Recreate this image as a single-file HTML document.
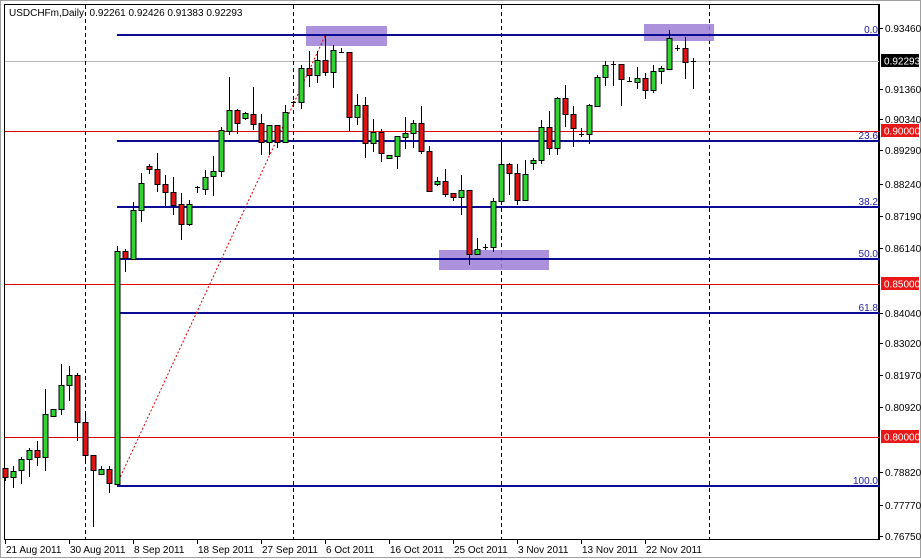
<!DOCTYPE html>
<html><head><meta charset="utf-8"><style>
html,body{margin:0;padding:0;background:#fff;}
svg{display:block;font-family:"Liberation Sans",sans-serif;}
.g{fill:#32d232;stroke:#000;stroke-width:1}
.r{fill:#dc1414;stroke:#000;stroke-width:1}
.t{font-size:10px;fill:#000}
.f{font-size:10px;fill:#2020b0}
</style></head><body>
<svg width="921" height="559" viewBox="0 0 921 559" xmlns="http://www.w3.org/2000/svg">
<rect x="0" y="0" width="921" height="559" fill="#fff"/>
<rect x="0.5" y="0.5" width="920" height="557" fill="none" stroke="#a0a0a0"/>
<rect x="4.5" y="4.5" width="874" height="535" fill="#fff" stroke="#000"/>
<line x1="5" y1="61.5" x2="879" y2="61.5" stroke="#b8b8b8"/>
<line x1="5" y1="131.5" x2="879" y2="131.5" stroke="#e00000"/>
<line x1="5" y1="284.5" x2="879" y2="284.5" stroke="#e00000"/>
<line x1="5" y1="437.5" x2="879" y2="437.5" stroke="#e00000"/>
<g stroke="#000" stroke-dasharray="4,3">
<line x1="85.5" y1="5" x2="85.5" y2="539"/>
<line x1="293.5" y1="5" x2="293.5" y2="539"/>
<line x1="501.5" y1="5" x2="501.5" y2="539"/>
<line x1="709.5" y1="5" x2="709.5" y2="539"/>
</g>
<g fill="#9d7fd6" opacity="0.85">
<rect x="306" y="26" width="81" height="20"/>
<rect x="644" y="24" width="70" height="17"/>
<rect x="439" y="250" width="110" height="20"/>
</g>
<g stroke="#0b0b96" stroke-width="2">
<line x1="117" y1="35" x2="879" y2="35"/>
<line x1="117" y1="141" x2="879" y2="141"/>
<line x1="117" y1="207" x2="879" y2="207"/>
<line x1="117" y1="259" x2="879" y2="259"/>
<line x1="117" y1="313" x2="879" y2="313"/>
<line x1="117" y1="486" x2="879" y2="486"/>
</g>
<g class="f" text-anchor="end">
<text x="878" y="33">0.0</text>
<text x="878" y="139">23.6</text>
<text x="878" y="205">38.2</text>
<text x="878" y="257">50.0</text>
<text x="878" y="311">61.8</text>
<text x="878" y="484">100.0</text>
</g>
<line x1="117" y1="484" x2="325" y2="36" stroke="#d00" stroke-dasharray="2,2"/>
<path stroke="#000" fill="none" d="
M5.5 468V481M13.5 466V488M21.5 457V484M29.5 448V477M37.5 441V466M45.5 389V471M53.5 409V417M61.5 364V415M69.5 366V401M77.5 373V441M85.5 411V462M93.5 455V527M101.5 466V475M109.5 466V493M117.5 246V484M125.5 249V272M133.5 202V259M141.5 173V222M149.5 164V174M157.5 153V192M165.5 175V206M173.5 177V215M181.5 193V240M189.5 200V226M197.5 186V193M205.5 170V195M213.5 156V196M221.5 127V177M229.5 77V135M237.5 109V134M245.5 112V120M253.5 87V130M261.5 114V155M269.5 125V155M277.5 125V148M285.5 105V143M293.5 101V104
M301.5 65V109M309.5 51V87M317.5 51V83M325.5 34V76M333.5 45V88M341.5 48V53M349.5 52V131M357.5 94V125M365.5 97V158M373.5 119V152M381.5 129V162M389.5 155V159M397.5 136V169M405.5 117V149M413.5 120V148M421.5 106V154M429.5 146V191M437.5 177V186M445.5 169V197M453.5 193V201M461.5 175V215M469.5 190V265M477.5 238V254M485.5 244V250M493.5 198V252M501.5 142V203M509.5 163V195M517.5 164V205M525.5 160V200M533.5 158V170M541.5 120V164M549.5 111V155M557.5 97V155M565.5 85V127M573.5 106V147M581.5 128V137M589.5 104V144M597.5 75V106M605.5 61V86M613.5 61V86M621.5 64V106M629.5 77V82M637.5 67V89M645.5 73V99M653.5 65V93M661.5 66V84M669.5 30V69M677.5 45V51M685.5 37V79M693.5 58V89
M195 187.5H200M291 102.5H296M339 52.5H344M579 134.5H584M611 64.5H616M627 81.5H632M675 48.5H680M691 61.5H696M483 247.5H488"/>
<g>
<rect class="r" x="3" y="468.5" width="5" height="9"/>
<rect class="g" x="11" y="471.5" width="5" height="6"/>
<rect class="g" x="19" y="459.5" width="5" height="11"/>
<rect class="g" x="27" y="450.5" width="5" height="9"/>
<rect class="r" x="35" y="450.5" width="5" height="7"/>
<rect class="g" x="43" y="414.5" width="5" height="43"/>
<rect class="g" x="51" y="409.5" width="5" height="7"/>
<rect class="g" x="59" y="385.5" width="5" height="24"/>
<rect class="g" x="67" y="375.5" width="5" height="10"/>
<rect class="r" x="75" y="375.5" width="5" height="47"/>
<rect class="r" x="83" y="422.5" width="5" height="33"/>
<rect class="r" x="91" y="455.5" width="5" height="15"/>
<rect class="g" x="99" y="469.5" width="5" height="5"/>
<rect class="r" x="107" y="469.5" width="5" height="14"/>
<rect class="g" x="115" y="251.5" width="5" height="233"/>
<rect class="r" x="123" y="251.5" width="5" height="7"/>
<rect class="g" x="131" y="210.5" width="5" height="49"/>
<rect class="g" x="139" y="183.5" width="5" height="27"/>
<rect class="r" x="147" y="166.5" width="5" height="3"/>
<rect class="r" x="155" y="169.5" width="5" height="15"/>
<rect class="r" x="163" y="184.5" width="5" height="8"/>
<rect class="r" x="171" y="192.5" width="5" height="13"/>
<rect class="r" x="179" y="204.5" width="5" height="20"/>
<rect class="g" x="187" y="204.5" width="5" height="20"/>
<rect class="g" x="203" y="177.5" width="5" height="12"/>
<rect class="g" x="211" y="171.5" width="5" height="5"/>
<rect class="g" x="219" y="130.5" width="5" height="41"/>
<rect class="g" x="227" y="110.5" width="5" height="21"/>
<rect class="r" x="235" y="110.5" width="5" height="13"/>
<rect class="g" x="243" y="113.5" width="5" height="5"/>
<rect class="r" x="251" y="114.5" width="5" height="10"/>
<rect class="r" x="259" y="123.5" width="5" height="19"/>
<rect class="g" x="267" y="125.5" width="5" height="17"/>
<rect class="r" x="275" y="125.5" width="5" height="17"/>
<rect class="g" x="283" y="112.5" width="5" height="30"/>
<rect class="g" x="299" y="68.5" width="5" height="34"/>
<rect class="r" x="307" y="68.5" width="5" height="7"/>
<rect class="g" x="315" y="60.5" width="5" height="15"/>
<rect class="r" x="323" y="60.5" width="5" height="12"/>
<rect class="g" x="331" y="50.5" width="5" height="22"/>
<rect class="r" x="347" y="52.5" width="5" height="65"/>
<rect class="g" x="355" y="105.5" width="5" height="12"/>
<rect class="r" x="363" y="105.5" width="5" height="38"/>
<rect class="g" x="371" y="132.5" width="5" height="11"/>
<rect class="r" x="379" y="132.5" width="5" height="21"/>
<rect class="g" x="387" y="155.5" width="5" height="3"/>
<rect class="g" x="395" y="136.5" width="5" height="20"/>
<rect class="g" x="403" y="133.5" width="5" height="4"/>
<rect class="g" x="411" y="123.5" width="5" height="10"/>
<rect class="r" x="419" y="123.5" width="5" height="28"/>
<rect class="r" x="427" y="151.5" width="5" height="40"/>
<rect class="g" x="435" y="181.5" width="5" height="3"/>
<rect class="r" x="443" y="181.5" width="5" height="13"/>
<rect class="r" x="451" y="193.5" width="5" height="4"/>
<rect class="g" x="459" y="190.5" width="5" height="7"/>
<rect class="r" x="467" y="190.5" width="5" height="64"/>
<rect class="g" x="475" y="249.5" width="5" height="5"/>
<rect class="g" x="491" y="201.5" width="5" height="46"/>
<rect class="g" x="499" y="164.5" width="5" height="37"/>
<rect class="r" x="507" y="164.5" width="5" height="9"/>
<rect class="r" x="515" y="173.5" width="5" height="27"/>
<rect class="g" x="523" y="174.5" width="5" height="26"/>
<rect class="g" x="531" y="160.5" width="5" height="3"/>
<rect class="g" x="539" y="127.5" width="5" height="33"/>
<rect class="r" x="547" y="127.5" width="5" height="21"/>
<rect class="g" x="555" y="98.5" width="5" height="50"/>
<rect class="r" x="563" y="98.5" width="5" height="16"/>
<rect class="r" x="571" y="114.5" width="5" height="14"/>
<rect class="g" x="587" y="105.5" width="5" height="29"/>
<rect class="g" x="595" y="77.5" width="5" height="29"/>
<rect class="g" x="603" y="65.5" width="5" height="12"/>
<rect class="r" x="619" y="64.5" width="5" height="15"/>
<rect class="g" x="635" y="78.5" width="5" height="4"/>
<rect class="r" x="643" y="78.5" width="5" height="12"/>
<rect class="g" x="651" y="71.5" width="5" height="19"/>
<rect class="g" x="659" y="68.5" width="5" height="3"/>
<rect class="g" x="667" y="38.5" width="5" height="31"/>
<rect class="r" x="683" y="48.5" width="5" height="14"/>
</g>
<line x1="879.5" y1="4" x2="879.5" y2="540" stroke="#000"/>
<line x1="4" y1="539.5" x2="880" y2="539.5" stroke="#000"/>
<g stroke="#000">
<path d="M879 28.5h4M879 89.5h4M879 119.5h4M879 150.5h4M879 184.5h4M879 216.5h4M879 248.5h4M879 313.5h4M879 343.5h4M879 375.5h4M879 407.5h4M879 472.5h4M879 505.5h4M879 536.5h4"/>
<path d="M5.5 539v5M69.5 539v5M133.5 539v5M197.5 539v5M261.5 539v5M325.5 539v5M389.5 539v5M453.5 539v5M517.5 539v5M581.5 539v5M645.5 539v5"/>
</g>
<g class="t">
<text x="885" y="32">0.93460</text>
<text x="885" y="93">0.91360</text>
<text x="885" y="123">0.90340</text>
<text x="885" y="154">0.89290</text>
<text x="885" y="188">0.88240</text>
<text x="885" y="220">0.87190</text>
<text x="885" y="252">0.86140</text>
<text x="885" y="317">0.84040</text>
<text x="885" y="347">0.83020</text>
<text x="885" y="379">0.81970</text>
<text x="885" y="411">0.80920</text>
<text x="885" y="476">0.78820</text>
<text x="885" y="509">0.77770</text>
<text x="885" y="540">0.76750</text>
</g>
<rect x="881" y="54" width="38" height="13" fill="#000"/>
<text x="884" y="64.5" class="t" style="fill:#fff">0.92293</text>
<rect x="881" y="124" width="38" height="13" fill="#e81818"/>
<text x="884" y="134.5" class="t" style="fill:#fff">0.90000</text>
<rect x="881" y="277" width="38" height="13" fill="#e81818"/>
<text x="884" y="287.5" class="t" style="fill:#fff">0.85000</text>
<rect x="881" y="430" width="38" height="13" fill="#e81818"/>
<text x="884" y="440.5" class="t" style="fill:#fff">0.80000</text>
<g class="t">
<text x="6" y="553">21 Aug 2011</text>
<text x="70" y="553">30 Aug 2011</text>
<text x="134" y="553">8 Sep 2011</text>
<text x="198" y="553">18 Sep 2011</text>
<text x="262" y="553">27 Sep 2011</text>
<text x="326" y="553">6 Oct 2011</text>
<text x="390" y="553">16 Oct 2011</text>
<text x="454" y="553">25 Oct 2011</text>
<text x="518" y="553">3 Nov 2011</text>
<text x="582" y="553">13 Nov 2011</text>
<text x="646" y="553">22 Nov 2011</text>
<text x="9" y="16">USDCHFm,Daily&#160;&#160;0.92261 0.92426 0.91383 0.92293</text>
</g>
</svg>
</body></html>
